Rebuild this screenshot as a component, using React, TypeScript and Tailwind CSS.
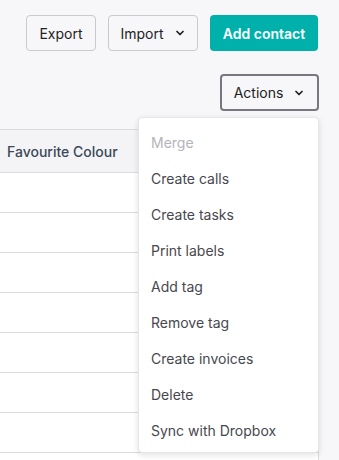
import { ChevronDown } from "lucide-react";

const actions = [
  "Create calls",
  "Create tasks",
  "Print labels",
  "Add tag",
  "Remove tag",
  "Create invoices",
  "Delete",
  "Sync with Dropbox",
];

export default function App() {
  return (
    <div className="h-[460px] bg-[#f7f7f9] font-['Inter',sans-serif] text-[14px] overflow-hidden">
      <div className="flex justify-end gap-3 pt-[15px] pr-[21px]">
        <button className="h-9 w-[70px] rounded border border-[#c9c9cf] text-[#222]">
          Export
        </button>
        <button className="h-9 w-[90px] rounded border border-[#c9c9cf] text-[#222] flex items-center justify-center gap-2.5">
          Import
          <ChevronDown size={12} strokeWidth={3.5} />
        </button>
        <button className="h-9 w-[108px] rounded bg-[#00b1ab] text-white font-semibold">
          Add contact
        </button>
      </div>

      <div className="flex justify-end pt-[23px] pr-[20px]">
        <div className="relative">
          <button className="h-[37px] w-[99px] rounded border-2 border-[#77777f] text-[#222] flex items-center justify-center gap-2.5">
            Actions
            <ChevronDown size={12} strokeWidth={3.5} />
          </button>
          <div className="absolute right-0 top-[43px] z-10 w-[181px] rounded bg-white border border-[#e6e6ea] shadow-[0_2px_6px_rgba(0,0,0,0.12)] pt-[6px] pb-[4px]">
            <div className="h-9 px-3 flex items-center text-[#b4b4bb]">Merge</div>
            {actions.map((a) => (
              <div key={a} className="h-9 px-3 flex items-center text-[#47474d]">
                {a}
              </div>
            ))}
          </div>
        </div>
      </div>

      <div className="mt-[18px] w-[319px] border-t border-r border-[#dcdce0] bg-white">
        <div className="h-[43px] bg-[#f4f4f6] border-b border-[#dcdce0] flex items-center pl-[7px] font-medium text-[#3a4858]">
          Favourite Colour
        </div>
        {Array.from({ length: 8 }).map((_, i) => (
          <div key={i} className="h-10 border-b border-[#dcdce0]" />
        ))}
      </div>
    </div>
  );
}
